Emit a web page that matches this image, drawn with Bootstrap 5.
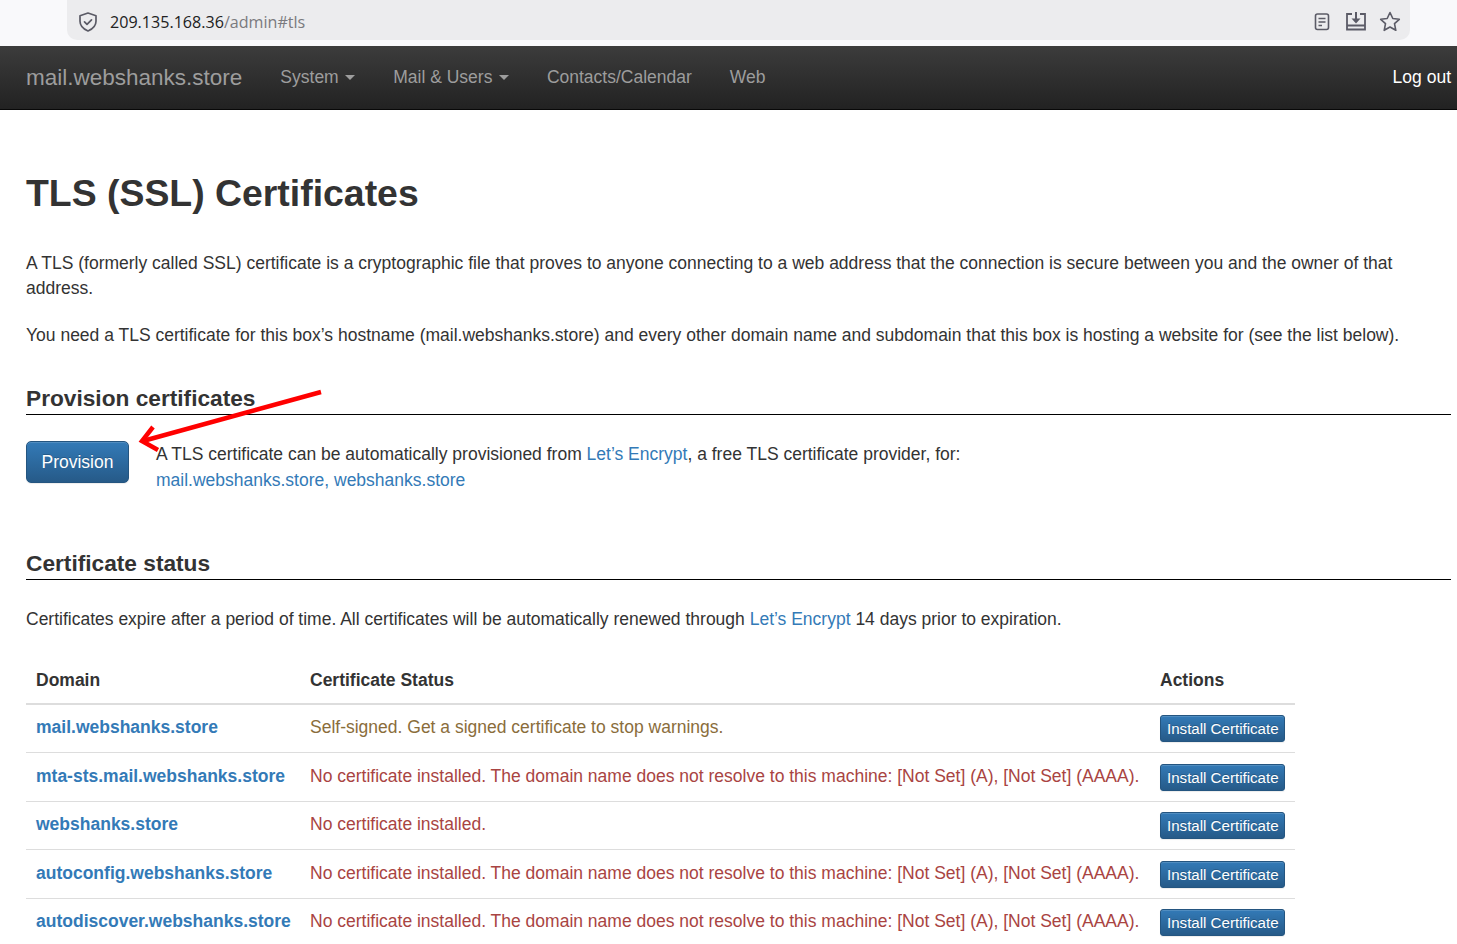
<!DOCTYPE html>
<html lang="en">
<head>
    <meta charset="UTF-8">
    <meta name="viewport" content="width=device-width, initial-scale=1.0">
    <title>TLS (SSL) Certificates</title>
    <link href="https://cdn.jsdelivr.net/npm/bootstrap@5.3.0/dist/css/bootstrap.min.css" rel="stylesheet">
    <style>
        body { font-family: "Liberation Sans", Arial, sans-serif; font-size: 17.5px; line-height: 25.7px; color: #333; overflow: hidden; }
        a { color: #337ab7; text-decoration: none; }
        .browser-bar { height: 46px; background: #f9f9fb; padding: 0 47px 6px 67px; }
        .url-pill { height: 40px; background: #ececee; border-radius: 0 0 10px 10px; padding: 3px 9px 0 11px; font-family: "Open Sans", sans-serif; font-size: 16.1px; color: #7a7a7e; }
        .url-text { padding-top: 3px; }
        .url-host { color: #222; }
        .icon-row { gap: 11px; }
        .top-nav { height: 64px; padding: 0 6px 0 26px; background: linear-gradient(to bottom, #3c3c3c, #222); border-bottom: 1px solid #080808; }
        .top-nav .navbar-brand { font-size: 22.5px; color: #9d9d9d; padding: 0; margin: 0 38px 0 0; }
        .top-nav .nav-link { font-size: 17.5px; color: #9d9d9d; padding: 0; margin-right: 38px; }
        .top-nav .dropdown-toggle::after { margin-left: 6.5px; vertical-align: 3px; border-top-width: 5px; border-right-width: 5px; border-left-width: 5px; }
        .top-nav .logout-link { color: #fff; margin: 0; }
        .page-body { padding: 58px 6px 0 26px; }
        .page-title { font-size: 37.4px; font-weight: 700; line-height: 50px; margin: 0 0 33px; }
        .intro { margin: 0 0 22px; line-height: 25px; }
        .sect-title { font-size: 22.7px; font-weight: 700; line-height: 28px; padding-bottom: 2px; margin: 0 0 27px; border-bottom: 1px solid #000; color: #333; }
        .first-sect { margin-top: 36px; margin-bottom: 26px; }
        .provision-box { position: relative; height: 108px; }
        .provision-text { padding-top: 1px; }
        .btn-blue { background: linear-gradient(to bottom, #337ab7, #265a88); border: 1px solid #245580; color: #fff; text-shadow: 0 -1px 0 rgba(0,0,0,.2); box-shadow: inset 0 1px 0 rgba(255,255,255,.15), 0 1px 1px rgba(0,0,0,.075); }
        .btn-provision { width: 103px; height: 42px; font-size: 17.5px; padding: 0; border-radius: 5px; margin-right: 27px; }
        .arrow-mark { position: absolute; left: 84px; top: -55px; }
        .status-note { margin: 0 0 24px; }
        .cert-table { width: 1269px; font-size: 17.5px; margin: 0; table-layout: fixed; }
        .cert-table th, .cert-table td { padding: 10px; line-height: 25.7px; color: #333; border-bottom: 1px solid #ddd; box-shadow: none; white-space: nowrap; vertical-align: top; }
        .cert-table th { font-weight: 700; padding: 11px 10px 10px; border-bottom: 2px solid #ddd; }
        .cert-table .col-domain { width: 274px; }
        .cert-table .col-status { width: 850px; }
        .cert-table td { height: 48px; padding: 10px 10px 0; }
        .cert-table tbody tr:nth-child(even) td { height: 49px; padding-top: 11px; }
        .cert-table td a { color: #337ab7; font-weight: 700; }
        .cert-table td.warn-text { color: #8a6d3b; }
        .cert-table td.err-text { color: #a94442; }
        .btn-install { font-size: 15.1px; line-height: 19px; padding: 3px 6px 4px; border-radius: 3px; display: block; width: 125px; height: 27px; white-space: nowrap; }
    </style>
</head>
<body>
    <div class="browser-bar">
        <div class="url-pill d-flex align-items-center">
            <svg width="20" height="20" viewBox="0 0 20 20" fill="none" stroke="#5b5b66" stroke-width="1.7" class="me-2">
                <path d="M10 1l8 2.700v5.500c0 4.400-3.400 7.800-8 9.800-4.600-2-8-5.400-8-9.800V3.700z" stroke-linejoin="round"/>
                <path d="M6.500 9.800l2.500 2.500 4.500-4.500" stroke-linecap="round" stroke-linejoin="round"/>
            </svg>
            <span class="ms-1 url-text"><span class="url-host">209.135.168.36</span>/admin#tls</span>
            <div class="ms-auto d-flex align-items-center icon-row">
                <svg width="22" height="22" viewBox="0 0 22 22" fill="none" stroke="#5b5b66" stroke-width="1.600">
                    <rect x="4.500" y="3" width="13" height="15.500" rx="2"/>
                    <path d="M7.500 7.500h7M7.500 11h7M7.500 14.500h3.500"/>
                </svg>
                <svg width="24" height="22" viewBox="0 0 24 22" fill="none" stroke="#5b5b66" stroke-width="1.600">
                    <path d="M8 3H3v15.500h18V3h-5M3 14.500h18" stroke-width="1.800"/>
                    <path d="M12 1v8" stroke-width="2"/>
                    <path d="M7.500 7.500h9L12 12.500z" fill="#5b5b66" stroke="none"/>
                </svg>
                <svg width="22" height="22" viewBox="0 0 22 22" fill="none" stroke="#5b5b66" stroke-width="1.600">
                    <path d="M11 1.500l2.800 6 6.500.8-4.800 4.400 1.300 6.600-5.800-3.300-5.800 3.300 1.300-6.600-4.800-4.400 6.500-.8z" stroke-linejoin="round"/>
                </svg>
            </div>
        </div>
    </div>

    <nav class="navbar top-nav d-flex align-items-center flex-nowrap justify-content-start">
        <a class="navbar-brand" href="#">mail.webshanks.store</a>
        <a class="nav-link dropdown-toggle" href="#">System</a>
        <a class="nav-link dropdown-toggle" href="#">Mail &amp; Users</a>
        <a class="nav-link" href="#">Contacts/Calendar</a>
        <a class="nav-link" href="#">Web</a>
        <a class="nav-link logout-link ms-auto" href="#">Log out</a>
    </nav>

    <div class="page-body">
        <h1 class="page-title">TLS (SSL) Certificates</h1>
        <p class="intro">A TLS (formerly called SSL) certificate is a cryptographic file that proves to anyone connecting to a web address that the connection is secure between you and the owner of that address.</p>
        <p class="intro">You need a TLS certificate for this box’s hostname (mail.webshanks.store) and every other domain name and subdomain that this box is hosting a website for (see the list below).</p>

        <h2 class="sect-title first-sect">Provision certificates</h2>
        <div class="provision-box d-flex align-items-start">
            <button type="button" class="btn btn-blue btn-provision flex-shrink-0">Provision</button>
            <div class="provision-text">A TLS certificate can be automatically provisioned from <a href="#">Let’s Encrypt</a>, a free TLS certificate provider, for:<br><a href="#">mail.webshanks.store, webshanks.store</a></div>
            <svg class="arrow-mark" width="220" height="70" viewBox="0 0 220 70" fill="none" stroke="#f00" stroke-width="4.500">
                <path d="M211 6L33 55"/>
                <path d="M43 41L32 55 48 64"/>
            </svg>
        </div>

        <h2 class="sect-title">Certificate status</h2>
        <p class="status-note">Certificates expire after a period of time. All certificates will be automatically renewed through <a href="#">Let’s Encrypt</a> 14 days prior to expiration.</p>

        <table class="table cert-table">
            <thead>
                <tr><th class="col-domain">Domain</th><th class="col-status">Certificate Status</th><th>Actions</th></tr>
            </thead>
            <tbody>
                <tr>
                    <td><a href="#">mail.webshanks.store</a></td>
                    <td class="warn-text">Self-signed. Get a signed certificate to stop warnings.</td>
                    <td><button type="button" class="btn btn-blue btn-install">Install Certificate</button></td>
                </tr>
                <tr>
                    <td><a href="#">mta-sts.mail.webshanks.store</a></td>
                    <td class="err-text">No certificate installed. The domain name does not resolve to this machine: [Not Set] (A), [Not Set] (AAAA).</td>
                    <td><button type="button" class="btn btn-blue btn-install">Install Certificate</button></td>
                </tr>
                <tr>
                    <td><a href="#">webshanks.store</a></td>
                    <td class="err-text">No certificate installed.</td>
                    <td><button type="button" class="btn btn-blue btn-install">Install Certificate</button></td>
                </tr>
                <tr>
                    <td><a href="#">autoconfig.webshanks.store</a></td>
                    <td class="err-text">No certificate installed. The domain name does not resolve to this machine: [Not Set] (A), [Not Set] (AAAA).</td>
                    <td><button type="button" class="btn btn-blue btn-install">Install Certificate</button></td>
                </tr>
                <tr>
                    <td><a href="#">autodiscover.webshanks.store</a></td>
                    <td class="err-text">No certificate installed. The domain name does not resolve to this machine: [Not Set] (A), [Not Set] (AAAA).</td>
                    <td><button type="button" class="btn btn-blue btn-install">Install Certificate</button></td>
                </tr>
            </tbody>
        </table>
    </div>
    <script src="https://cdn.jsdelivr.net/npm/bootstrap@5.3.0/dist/js/bootstrap.bundle.min.js"></script>
</body>
</html>
